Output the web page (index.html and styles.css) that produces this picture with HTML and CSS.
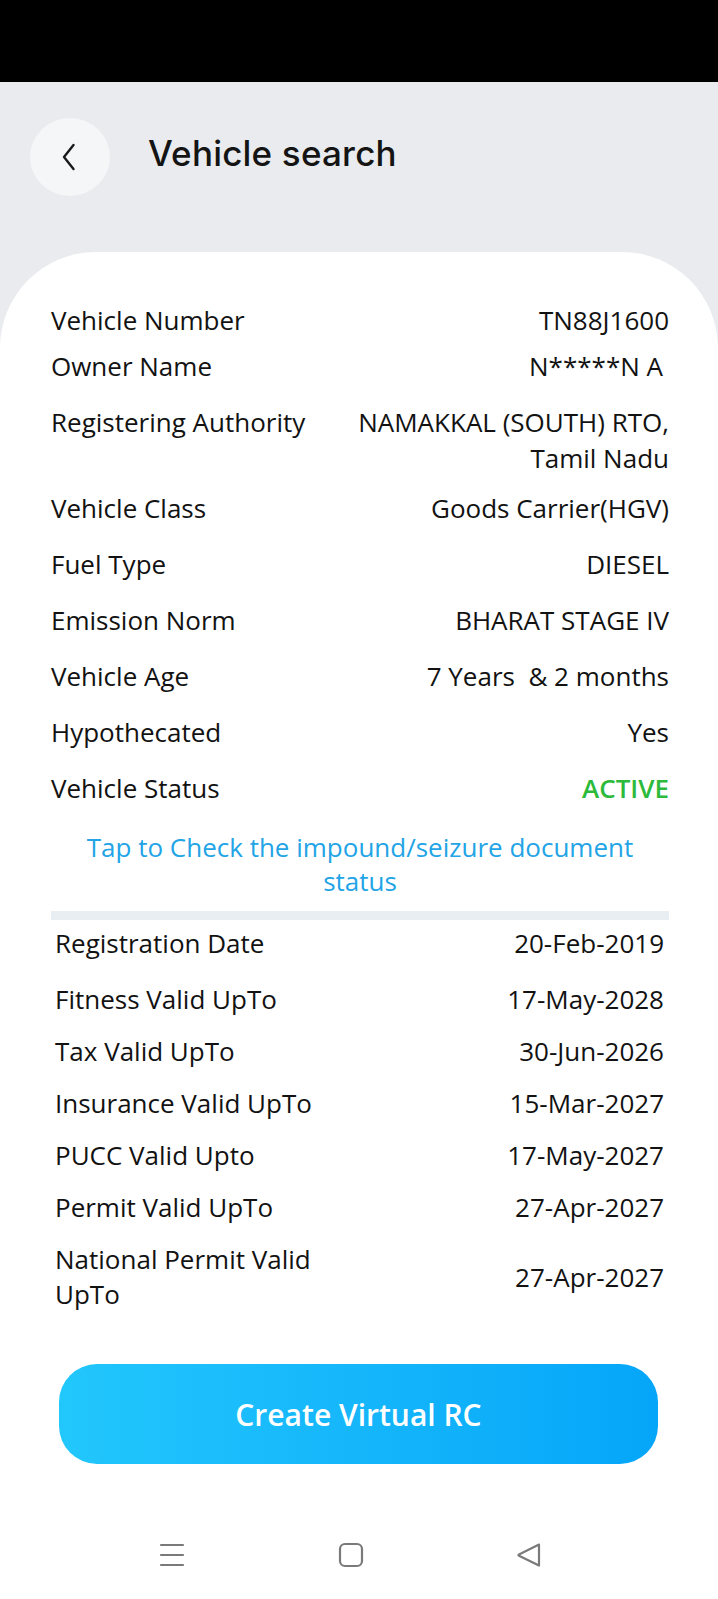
FILE: index.html
```html
<!DOCTYPE html>
<html lang="en">
<head>
<meta charset="utf-8">
<title>Vehicle search</title>
<link rel="stylesheet" href="styles.css">
</head>
<body>
<div class="statusbar"></div>
<header class="header">
  <button class="back" aria-label="Back">
    <svg width="18" height="30" viewBox="0 0 18 30"><polyline points="13.5,3 4,15 13.5,27" fill="none" stroke="#1a1a1a" stroke-width="2.4" stroke-linecap="round" stroke-linejoin="round"/></svg>
  </button>
  <h1 class="title">Vehicle search</h1>
</header>
<main class="card">
  <section class="details">
    <div class="row first"><span class="label">Vehicle Number</span><span class="value">TN88J1600</span></div>
    <div class="row"><span class="label">Owner Name</span><span class="value owner">N*****N A</span></div>
    <div class="row multi"><span class="label">Registering Authority</span><span class="value">NAMAKKAL (SOUTH) RTO, Tamil Nadu</span></div>
    <div class="row"><span class="label">Vehicle Class</span><span class="value">Goods Carrier(HGV)</span></div>
    <div class="row"><span class="label">Fuel Type</span><span class="value">DIESEL</span></div>
    <div class="row"><span class="label">Emission Norm</span><span class="value">BHARAT STAGE IV</span></div>
    <div class="row"><span class="label">Vehicle Age</span><span class="value">7 Years &nbsp;&amp; 2 months</span></div>
    <div class="row"><span class="label">Hypothecated</span><span class="value">Yes</span></div>
    <div class="row last"><span class="label">Vehicle Status</span><span class="value active">ACTIVE</span></div>
  </section>
  <a class="link">Tap to Check the impound/seizure document status</a>
  <div class="divider"></div>
  <section class="dates">
    <div class="drow"><span class="label">Registration Date</span><span class="value">20-Feb-2019</span></div>
    <div class="drow"><span class="label">Fitness Valid UpTo</span><span class="value">17-May-2028</span></div>
    <div class="drow"><span class="label">Tax Valid UpTo</span><span class="value">30-Jun-2026</span></div>
    <div class="drow"><span class="label">Insurance Valid UpTo</span><span class="value">15-Mar-2027</span></div>
    <div class="drow"><span class="label">PUCC Valid Upto</span><span class="value">17-May-2027</span></div>
    <div class="drow"><span class="label">Permit Valid UpTo</span><span class="value">27-Apr-2027</span></div>
    <div class="drow"><span class="label">National Permit Valid UpTo</span><span class="value">27-Apr-2027</span></div>
  </section>
  <div class="btnwrap"><button class="cta">Create Virtual RC</button></div>
  <nav class="navbar">
    <svg width="26" height="24" viewBox="0 0 26 24"><g stroke="#7a7a7a" stroke-width="2.2" stroke-linecap="round"><line x1="2" y1="2" x2="24" y2="2"/><line x1="2" y1="12" x2="24" y2="12"/><line x1="2" y1="22" x2="24" y2="22"/></g></svg>
    <svg width="26" height="26" viewBox="0 0 26 26"><rect x="2" y="2" width="22" height="22" rx="5" fill="none" stroke="#7a7a7a" stroke-width="2.2"/></svg>
    <svg width="26" height="26" viewBox="0 0 26 26"><path d="M23 2.5 L3 12.5 Q1.8 13 3 13.7 L23 23.5 Z" fill="none" stroke="#7a7a7a" stroke-width="2.2" stroke-linejoin="round"/></svg>
  </nav>
</main>
</body>
</html>
```
FILE: styles.css
```css
* { box-sizing: border-box; }
html, body { margin: 0; padding: 0; }
body {
  width: 718px;
  min-height: 1599px;
  background: #e9ebee;
  font-family: "Open Sans", "Noto Sans", sans-serif;
  color: #121212;
  display: flex;
  flex-direction: column;
}
.statusbar { height: 82px; background: #000; }
.header {
  height: 170px;
  display: flex;
  align-items: flex-start;
  padding: 36px 0 0 30px;
}
.back {
  width: 80px;
  height: 78px;
  border-radius: 50%;
  border: none;
  background: #f5f6f8;
  display: flex;
  align-items: center;
  justify-content: center;
  padding: 0 2px 0 0;
}
.title {
  margin: 0 0 0 38px;
  font-family: "Inter", "Noto Sans", sans-serif;
  font-weight: 500;
  font-size: 35px;
  line-height: 70px;
  letter-spacing: 0.2px;
  color: #141414;
}
.card {
  flex: 1;
  background: #fff;
  border-radius: 96px 96px 0 0;
  padding: 50px 49px 0 51px;
  display: flex;
  flex-direction: column;
}
.row, .drow {
  display: flex;
  justify-content: space-between;
  align-items: flex-start;
  font-size: 26px;
  line-height: 36px;
  margin-bottom: 20px;
}
.row.first { margin-bottom: 10px; }
.row.multi { margin-bottom: 14px; }
.row.last { margin-bottom: 0; }
.label { flex: 1 1 0; }
.value { flex: 1 1 0; text-align: right; }
.details .value { flex-grow: 1.2; }
.owner { padding-right: 6px; }
.active { color: #2cba3a; font-weight: 600; }
.link {
  display: block;
  margin: 24px 26px 0;
  text-align: center;
  color: #22a4e6;
  font-size: 26px;
  line-height: 34px;
}
.divider {
  height: 9px;
  background: #e9eef3;
  margin-top: 13px;
}
.dates { padding: 6px 5px 0 4px; }
.drow { line-height: 35px; margin-bottom: 17px; align-items: center; }
.drow:first-child { margin-bottom: 21px; }
.drow:last-child { margin-bottom: 0; }
.btnwrap { padding: 52px 11px 0 8px; }
.cta {
  width: 100%;
  height: 100px;
  border: none;
  border-radius: 38px;
  background: linear-gradient(90deg, #22c7fc 0%, #16b6fb 50%, #05a6f9 100%);
  color: #fff;
  font-family: "Open Sans", "Noto Sans", sans-serif;
  font-weight: 600;
  font-size: 30px;
  display: block;
}
.navbar {
  display: flex;
  justify-content: space-between;
  align-items: center;
  padding: 78px 127px 0 108px;
}
```
